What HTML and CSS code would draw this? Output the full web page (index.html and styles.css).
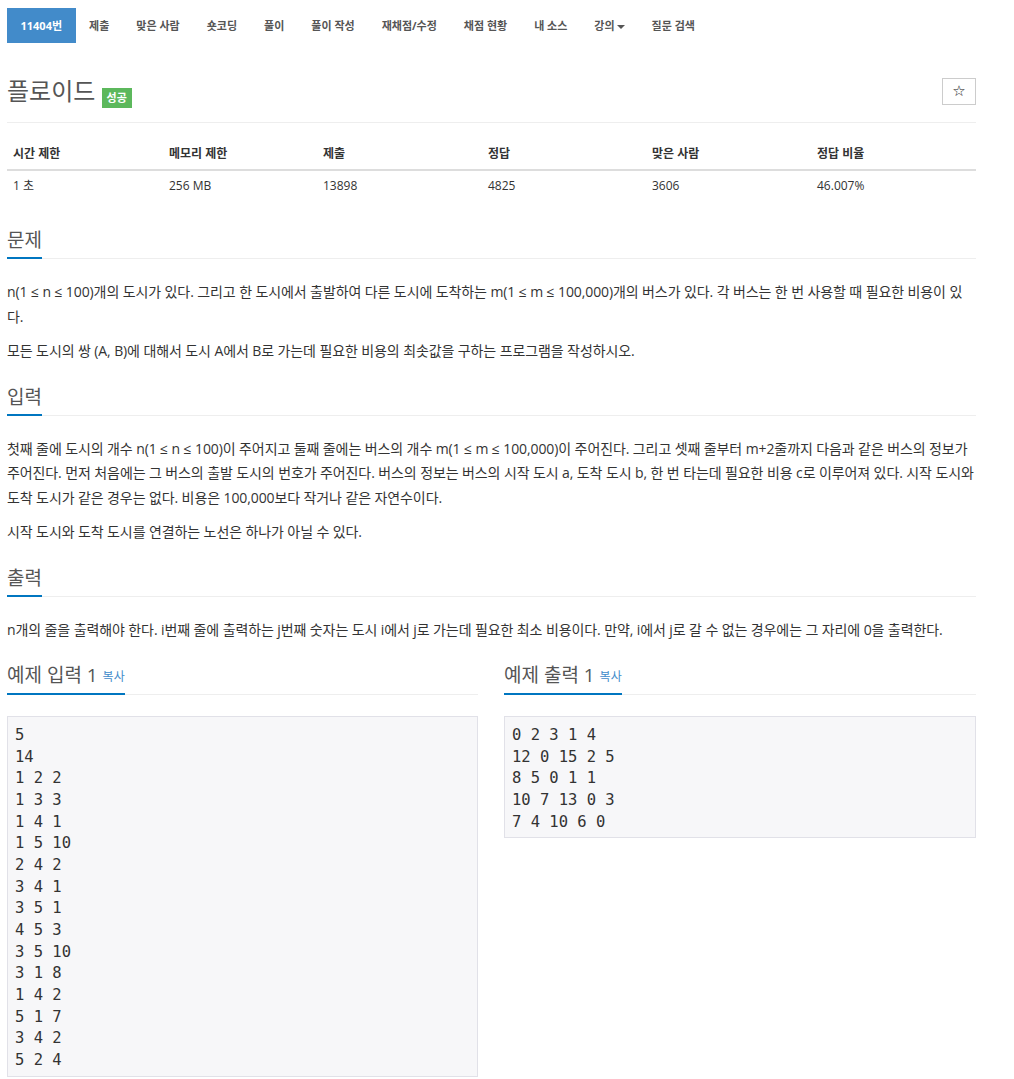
FILE: index.html
```html
<!DOCTYPE html>
<html lang="ko">
<head>
  <meta charset="UTF-8" />
  <title>11404번: 플로이드</title>
  <link rel="stylesheet" href="styles.css">
</head>
<body>
  <div class="wrap">
    <ul class="problem-menu">
      <li class="active"><a href="#">11404번</a></li>
      <li><a href="#">제출</a></li>
      <li><a href="#">맞은 사람</a></li>
      <li><a href="#">숏코딩</a></li>
      <li><a href="#">풀이</a></li>
      <li><a href="#">풀이 작성</a></li>
      <li><a href="#">재채점/수정</a></li>
      <li><a href="#">채점 현황</a></li>
      <li><a href="#">내 소스</a></li>
      <li><a href="#">강의<span class="caret"></span></a></li>
      <li><a href="#">질문 검색</a></li>
    </ul>

    <div class="page-header">
      <h1 class="problem-title">플로이드 <span class="label-success">성공</span></h1>
      <button class="btn-star">☆</button>
    </div>

    <table class="problem-info">
      <thead>
        <tr>
          <th>시간 제한</th>
          <th>메모리 제한</th>
          <th>제출</th>
          <th>정답</th>
          <th>맞은 사람</th>
          <th>정답 비율</th>
        </tr>
      </thead>
      <tbody>
        <tr>
          <td>1 초</td>
          <td>256 MB</td>
          <td>13898</td>
          <td>4825</td>
          <td>3606</td>
          <td>46.007%</td>
        </tr>
      </tbody>
    </table>

    <section class="problem-section">
      <h2 class="headline"><span>문제</span></h2>
      <p>n(1 ≤ n ≤ 100)개의 도시가 있다. 그리고 한 도시에서 출발하여 다른 도시에 도착하는 m(1 ≤ m ≤ 100,000)개의 버스가 있다. 각 버스는 한 번 사용할 때 필요한 비용이 있다.</p>
      <p>모든 도시의 쌍 (A, B)에 대해서 도시 A에서 B로 가는데 필요한 비용의 최솟값을 구하는 프로그램을 작성하시오.</p>
    </section>

    <section class="problem-section">
      <h2 class="headline"><span>입력</span></h2>
      <p>첫째 줄에 도시의 개수 n(1 ≤ n ≤ 100)이 주어지고 둘째 줄에는 버스의 개수 m(1 ≤ m ≤ 100,000)이 주어진다. 그리고 셋째 줄부터 m+2줄까지 다음과 같은 버스의 정보가 주어진다. 먼저 처음에는 그 버스의 출발 도시의 번호가 주어진다. 버스의 정보는 버스의 시작 도시 a, 도착 도시 b, 한 번 타는데 필요한 비용 c로 이루어져 있다. 시작 도시와 도착 도시가 같은 경우는 없다. 비용은 100,000보다 작거나 같은 자연수이다.</p>
      <p>시작 도시와 도착 도시를 연결하는 노선은 하나가 아닐 수 있다.</p>
    </section>

    <section class="problem-section">
      <h2 class="headline"><span>출력</span></h2>
      <p>n개의 줄을 출력해야 한다. i번째 줄에 출력하는 j번째 숫자는 도시 i에서 j로 가는데 필요한 최소 비용이다. 만약, i에서 j로 갈 수 없는 경우에는 그 자리에 0을 출력한다.</p>
    </section>

    <div class="samples">
      <section>
        <h2 class="headline"><span>예제 입력 1 <a class="copy" href="#">복사</a></span></h2>
        <pre class="sampledata">5
14
1 2 2
1 3 3
1 4 1
1 5 10
2 4 2
3 4 1
3 5 1
4 5 3
3 5 10
3 1 8
1 4 2
5 1 7
3 4 2
5 2 4</pre>
      </section>
      <section>
        <h2 class="headline"><span>예제 출력 1 <a class="copy" href="#">복사</a></span></h2>
        <pre class="sampledata">0 2 3 1 4
12 0 15 2 5
8 5 0 1 1
10 7 13 0 3
7 4 10 6 0</pre>
      </section>
    </div>
  </div>
</body>
</html>
```

FILE: styles.css
```css
body {
  margin: 0;
  background: #fff;
  color: #333;
  font-family: 'Open Sans', 'Noto Sans CJK KR', sans-serif;
  font-feature-settings: "palt";
  font-size: 14px;
}
a {
  text-decoration: none;
}
.wrap {
  width: 969px;
  padding: 8px 0 0 7px;
}

/* menu */
.problem-menu {
  display: flex;
  list-style: none;
  margin: 0;
  padding: 0;
}
.problem-menu a {
  display: block;
  height: 35px;
  line-height: 35px;
  padding: 0 13.5px;
  font-size: 11px;
  font-weight: bold;
  color: #555;
}
.problem-menu .active a {
  background: #428bca;
  color: #fff;
}
.caret {
  display: inline-block;
  width: 0;
  height: 0;
  margin-left: 2px;
  vertical-align: middle;
  border-top: 4px solid #555;
  border-left: 4px solid transparent;
  border-right: 4px solid transparent;
}

/* title */
.page-header {
  display: flex;
  justify-content: space-between;
  align-items: center;
  margin-top: 30px;
  padding-bottom: 13px;
  border-bottom: 1px solid #eee;
}
.problem-title {
  margin: 0;
  font-size: 24px;
  line-height: 36px;
  font-weight: normal;
  color: #555;
}
.label-success {
  display: inline-block;
  padding: 3px 5px;
  background: #5cb85c;
  color: #fff;
  font-size: 11px;
  line-height: 14px;
  font-weight: bold;
  vertical-align: -2px;
}
.btn-star {
  width: 34px;
  height: 27px;
  padding: 0;
  background: #fff;
  border: 1px solid #ccc;
  color: #111;
  font-family: 'DejaVu Sans', sans-serif;
  font-size: 15px;
  font-weight: bold;
}

/* info table */
.problem-info {
  width: 100%;
  margin-top: 16px;
  margin-bottom: 28px;
  border-collapse: collapse;
  table-layout: fixed;
  font-size: 12px;
}
.problem-info th,
.problem-info td {
  padding: 5px 6px;
  line-height: 20px;
  text-align: left;
}
.problem-info th {
  border-bottom: 2px solid #ddd;
}
.problem-info th:nth-child(1) { width: 144px; }
.problem-info th:nth-child(2) { width: 142px; }
.problem-info th:nth-child(3) { width: 153px; }
.problem-info th:nth-child(4) { width: 152px; }
.problem-info th:nth-child(5) { width: 153px; }

/* sections */
.problem-section {
  margin-top: 22px;
}
.headline {
  display: flex;
  margin: 0 0 21px;
  border-bottom: 1px solid #eee;
  font-size: 19px;
  line-height: 23px;
  font-weight: normal;
  color: #555;
}
.headline span {
  padding-bottom: 5px;
  margin-bottom: -1px;
  border-bottom: 2px solid #0076c0;
}
.problem-section p {
  margin: 0 0 10px;
  line-height: 24.5px;
  letter-spacing: -0.1px;
}
.copy {
  font-size: 12px;
  color: #428bca;
  vertical-align: 1px;
}

/* samples */
.samples {
  display: grid;
  grid-template-columns: 471px 472px;
  column-gap: 26px;
  margin-top: 22px;
}
.sampledata {
  margin: 0;
  padding: 8px 7px 4px;
  background: #f7f7f9;
  border: 1px solid #e1e1e8;
  font-family: 'DejaVu Sans Mono', monospace;
  font-size: 15.5px;
  line-height: 21.67px;
  color: #333;
}
```
